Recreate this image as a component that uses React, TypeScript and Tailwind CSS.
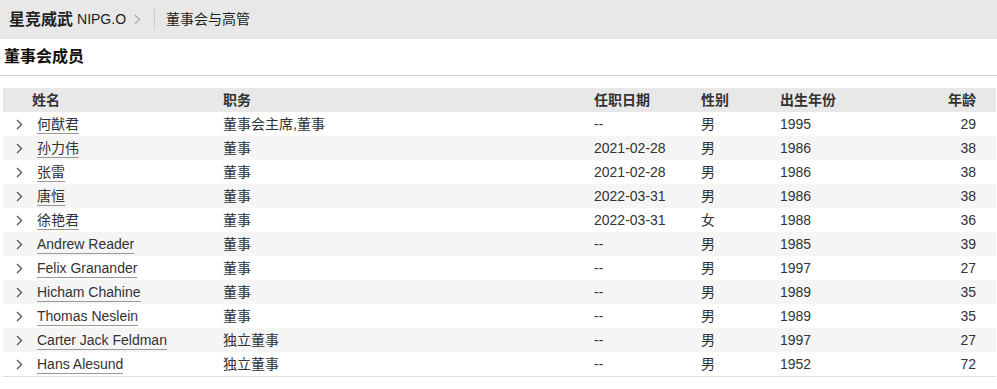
const members = [
  { name: '何猷君', role: '董事会主席,董事', date: '--', sex: '男', born: '1995', age: '29' },
  { name: '孙力伟', role: '董事', date: '2021-02-28', sex: '男', born: '1986', age: '38' },
  { name: '张雷', role: '董事', date: '2021-02-28', sex: '男', born: '1986', age: '38' },
  { name: '唐恒', role: '董事', date: '2022-03-31', sex: '男', born: '1986', age: '38' },
  { name: '徐艳君', role: '董事', date: '2022-03-31', sex: '女', born: '1988', age: '36' },
  { name: 'Andrew Reader', role: '董事', date: '--', sex: '男', born: '1985', age: '39' },
  { name: 'Felix Granander', role: '董事', date: '--', sex: '男', born: '1997', age: '27' },
  { name: 'Hicham Chahine', role: '董事', date: '--', sex: '男', born: '1989', age: '35' },
  { name: 'Thomas Neslein', role: '董事', date: '--', sex: '男', born: '1989', age: '35' },
  { name: 'Carter Jack Feldman', role: '独立董事', date: '--', sex: '男', born: '1997', age: '27' },
  { name: 'Hans Alesund', role: '独立董事', date: '--', sex: '男', born: '1952', age: '72' },
];

function Chevron({ className }: { className?: string }) {
  return (
    <svg width="7" height="11" viewBox="0 0 7 11" className={className}>
      <polyline points="1,1 5.5,5.5 1,10" fill="none" stroke="currentColor" strokeWidth="1.3" />
    </svg>
  );
}

export default function App() {
  return (
    <div
      className="w-[997px] h-[389px] bg-white text-[#333] overflow-hidden"
      style={{ fontFamily: '"Liberation Sans", "Noto Sans CJK SC", sans-serif' }}
    >
      {/* Breadcrumb bar */}
      <div className="h-[39px] bg-[#e8e8e8] flex items-center pl-[9px]">
        <span className="text-[16px] font-bold text-[#222]">星竞威武</span>
        <span className="text-[14px] ml-[4px] text-[#222]">NIPG.O</span>
        <Chevron className="ml-[8px] text-[#aaa]" />
        <div className="w-px h-[21px] bg-[#ccc] ml-[13px]" />
        <span className="text-[14px] ml-[11px] text-[#222]">董事会与高管</span>
      </div>

      {/* Section title */}
      <div className="h-[37px] flex items-center pl-[4px] border-b border-[#ccc]">
        <h2 className="text-[16px] font-bold text-[#111]">董事会成员</h2>
      </div>

      {/* Table */}
      <div className="mt-[12px] ml-[3px] mr-[1px] border-b border-[#ddd]">
        <div className="grid grid-cols-[29px_191px_371px_107px_79px_1fr_60px] h-[24px] items-center bg-[#e8e8e8] text-[14px] font-bold pr-[20px]">
          <div />
          <div>姓名</div>
          <div>职务</div>
          <div>任职日期</div>
          <div>性别</div>
          <div>出生年份</div>
          <div className="text-right">年龄</div>
        </div>
        {members.map((m, i) => (
          <div
            key={i}
            className={`grid grid-cols-[29px_191px_371px_107px_79px_1fr_60px] h-[24px] items-center text-[14px] pr-[20px] ${
              i % 2 === 1 ? 'bg-[#f5f5f5]' : 'bg-white'
            }`}
          >
            <div className="flex justify-end pr-[9px] text-[#555]">
              <Chevron />
            </div>
            <div className="pl-[5px]">
              <span className="inline-block leading-[18px] border-b border-[#999]">{m.name}</span>
            </div>
            <div>{m.role}</div>
            <div>{m.date}</div>
            <div>{m.sex}</div>
            <div>{m.born}</div>
            <div className="text-right">{m.age}</div>
          </div>
        ))}
      </div>
    </div>
  );
}
